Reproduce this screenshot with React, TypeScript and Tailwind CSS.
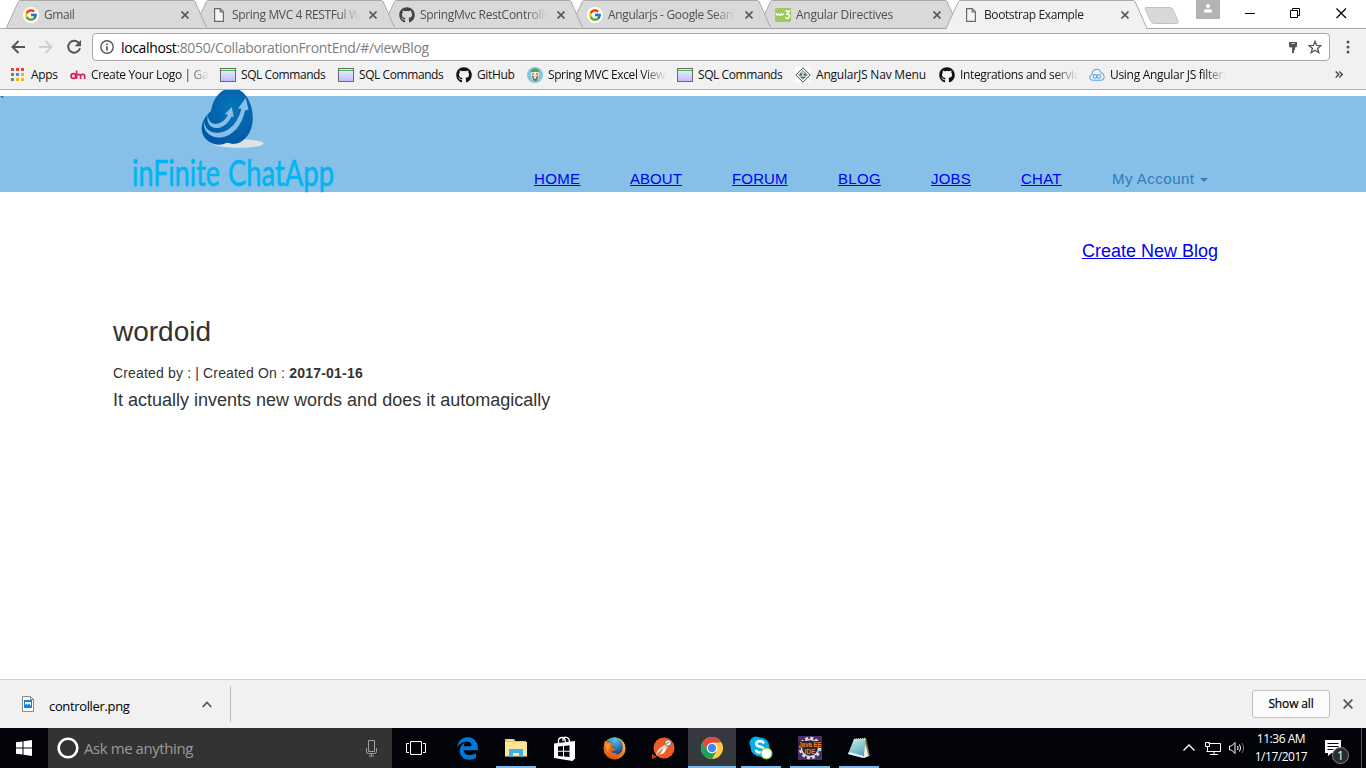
import React from "react";
import type { ReactNode } from "react";
import { FcGoogle } from "react-icons/fc";
import { FaGithub, FaEdgeLegacy } from "react-icons/fa";

const PageIcon = () => (
  <svg width="16" height="16" viewBox="0 0 16 16" fill="none" stroke="#6a6a6a" strokeWidth="1.2">
    <path d="M3.6 1.6h5.6l3.2 3.2v9.6H3.600z" fill="#f4f4f4" />
    <path d="M9.200 1.600v3.400h3.200" />
  </svg>
);

const GoogleIcon = () => (
  <span className="flex h-4 w-4 items-center justify-center rounded-full bg-white">
    <FcGoogle size={14} />
  </span>
);

const W3Icon = () => (
  <svg width="16" height="14" viewBox="0 0 16 14">
    <rect width="16" height="14" rx="1" fill="#9bcb5c" />
    <path d="M1 5.200q.8 3.300 2.500.8 1.500 2.500 2.800 0 1.200 1.800 2.500-.5" fill="none" stroke="#fff" strokeWidth="1.400" />
    <path d="M10.200 3h4l-2.200 3q3 0 2.500 2.600-1 2.600-4.300 1" fill="none" stroke="#fff" strokeWidth="1.500" />
  </svg>
);

const SqlIcon = () => (
  <svg width="16" height="14" viewBox="0 0 16 14">
    <defs>
      <linearGradient id="sql" x1="0" y1="0" x2="0" y2="1">
        <stop offset="0" stopColor="#f0f0ff" />
        <stop offset="1" stopColor="#bcbcff" />
      </linearGradient>
    </defs>
    <rect x=".5" y=".5" width="15" height="13" fill="url(#sql)" stroke="#6b6b6b" />
    <rect x="1" y="1" width="14" height="3" fill="#d9f5d4" />
    <rect x="1" y="2" width="14" height="1" fill="#43b649" />
  </svg>
);

const AppsIcon = () => (
  <svg width="14" height="14" viewBox="0 0 14 14">
    <path d="M0 0h3v3H0zM5 0h3v3H5zM10 0h3v3h-3z" fill="#ea4335" />
    <path d="M0 5h3v3H0zM0 10h3v3H0z" fill="#34a853" />
    <path d="M5 5h3v3H5z" fill="#4285f4" />
    <path d="M10 5h3v3h-3zM5 10h3v3H5zM10 10h3v3h-3z" fill="#fbb305" />
  </svg>
);

const DmIcon = () => (
  <svg width="17" height="10" viewBox="0 0 17 10" fill="none" stroke="#d12360" strokeWidth="1.800">
    <circle cx="3.600" cy="6" r="2.500" />
    <path d="M7 .300v8.900M7 5.500q1.900-2.500 4.200 0V9.200M11.200 5.500q2.400-2.500 4.400 0V9.200" />
  </svg>
);

const SpringIcon = () => (
  <svg width="16" height="16" viewBox="0 0 16 16">
    <circle cx="8" cy="8" r="8" fill="#7cc8e6" />
    <path d="M4 5h8v5l-2 4H6l-2-4z" fill="#f6eddc" />
    <path d="M3.500 5.500Q4 1.500 8 1.500t4.500 4q-4.500-1.500-9 0z" fill="#689b45" />
    <path d="M4.300 8.500Q8 10 11.700 8.500L10 14H6.500z" fill="#7d7557" />
    <path d="M6.300 9.500h3.400l-1 2H7.300z" fill="#fff" />
    <path d="M5 7h2M9 7h2" stroke="#444" />
  </svg>
);

const DiamondIcon = () => (
  <svg width="16" height="16" viewBox="0 0 16 16">
    <rect width="16" height="16" fill="#fbfbfb" />
    <path d="M8 .800 15.200 8 8 15.200.800 8z" fill="#fff" stroke="#4a4a4a" />
    <path d="M8 3.500 12.500 8 8 12.500 3.500 8z" fill="#b9cbc2" stroke="#6d8177" strokeWidth=".800" />
    <path d="M5 6.500h2v2H5zM9 6.500h2v2H9z" fill="#4c6157" />
    <path d="M6 10.500h4" stroke="#4c6157" />
  </svg>
);

const CloudIcon = () => (
  <svg width="17" height="14" viewBox="0 0 17 14" fill="none" stroke="#55a9ee" strokeWidth="1.100">
    <path d="M4.300 12.500Q.800 12.500.800 9.500q0-2.300 2.500-3Q3.500 1 8 1q3.700 0 4.700 3.700Q16 5.500 16 9q0 3.500-3.500 3.500z" />
    <circle cx="6.400" cy="8.500" r="1.900" />
    <circle cx="10.500" cy="8.500" r="1.900" />
  </svg>
);

const Cross = ({ size = 8, color = "#5a5a5a", w = 1.7 }: { size?: number; color?: string; w?: number }) => (
  <svg width={size} height={size} viewBox="0 0 8 8" stroke={color} strokeWidth={w}>
    <path d="M.500.500l7 7M7.500.500l-7 7" />
  </svg>
);

type TabInfo = { title: string; icon: ReactNode; z: string; track: string; active?: boolean };

const tabs: TabInfo[] = [
  { title: "Gmail", icon: <GoogleIcon />, z: "z-[5]", track: "tracking-[-0.45px]" },
  { title: "Spring MVC 4 RESTFul Web", icon: <PageIcon />, z: "z-[4]", track: "tracking-[-0.35px]" },
  { title: "SpringMvc RestController", icon: <FaGithub size={16} color="#444" />, z: "z-[3]", track: "tracking-[-0.28px]" },
  { title: "Angularjs - Google Search", icon: <GoogleIcon />, z: "z-[2]", track: "tracking-[-0.32px]" },
  { title: "Angular Directives", icon: <W3Icon />, z: "z-[1]", track: "tracking-[-0.25px]" },
  { title: "Bootstrap Example", icon: <PageIcon />, z: "z-[6]", track: "tracking-[-0.4px]", active: true },
];

function Tab({ tab }: { tab: TabInfo }) {
  return (
    <div className={`relative -mr-[13px] flex h-[29px] w-[201px] shrink-0 items-center pl-[17px] ${tab.z}`}>
      <svg className="absolute inset-0" width="201" height="29" viewBox="0 0 201 29">
        <path
          d="M0 28.500 12.500 1.500Q13 .500 14.500.500H187q1.500 0 2 1L201 28.500"
          fill={tab.active ? "#f1f1f1" : "#d9d9d9"}
          stroke="#a9a9a9"
        />
        <path d="M1 28.500H200" stroke={tab.active ? "#f1f1f1" : "#a0a0a0"} />
      </svg>
      <span className="relative flex w-4 shrink-0 justify-center">{tab.icon}</span>
      <span
        className={`relative ml-[5px] w-[127px] overflow-hidden whitespace-nowrap [mask-image:linear-gradient(to_right,#000_106px,transparent_127px)] ${tab.track} ${tab.active ? "text-[#222]" : "text-[#505050]"}`}
      >
        {tab.title}
      </span>
      <span className="relative ml-[10px]"><Cross /></span>
    </div>
  );
}

const bookmarks: { label: string; icon: ReactNode; cls: string }[] = [
  { label: "Create Your Logo | Game", icon: <DmIcon />, cls: "w-[117px] tracking-[-0.36px] [mask-image:linear-gradient(to_right,#000_94px,transparent_118px)]" },
  { label: "SQL Commands", icon: <SqlIcon />, cls: "w-[85px] tracking-[-0.42px]" },
  { label: "SQL Commands", icon: <SqlIcon />, cls: "w-[85px] tracking-[-0.42px]" },
  { label: "GitHub", icon: <FaGithub size={16} color="#111" />, cls: "w-[38px] tracking-[-0.35px]" },
  { label: "Spring MVC Excel View", icon: <SpringIcon />, cls: "w-[117px] tracking-[-0.4px] [mask-image:linear-gradient(to_right,#000_94px,transparent_118px)]" },
  { label: "SQL Commands", icon: <SqlIcon />, cls: "w-[85px] tracking-[-0.42px]" },
  { label: "AngularJS Nav Menu", icon: <DiamondIcon />, cls: "w-[111px] tracking-[-0.2px]" },
  { label: "Integrations and services", icon: <FaGithub size={16} color="#111" />, cls: "w-[117px] tracking-[-0.35px] [mask-image:linear-gradient(to_right,#000_94px,transparent_118px)]" },
  { label: "Using Angular JS filters", icon: <CloudIcon />, cls: "w-[115px] tracking-[-0.3px] [mask-image:linear-gradient(to_right,#000_94px,transparent_116px)]" },
];

function Browser() {
  return (
    <header className="h-[90px] shrink-0 border-b border-[#b0b0b0] bg-[#f1f1f1] text-[12px]">
      <div className="flex h-[29px] bg-white pl-1.5 shadow-[inset_0_-1px_0_#a9a9a9]">
        {tabs.map((t) => (
          <Tab key={t.title} tab={t} />
        ))}
        <svg className="ml-[9px] mt-[6px]" width="40" height="19" viewBox="0 0 40 19">
          <path d="M3 1.500H27q2 0 3 2L35 15q.5 2.500-1.500 2.500H11q-2 0-3-2L2.500 4Q1.500 1.500 3 1.500z" fill="#d8d8d8" stroke="#c2c2c2" />
        </svg>
        <div className="ml-[13px] flex h-[19px] w-6 justify-center bg-[#b3b3b3] pt-1">
          <svg width="8" height="9" viewBox="0 0 8 9" fill="#fff">
            <circle cx="4" cy="2" r="2" />
            <path d="M0 8.500V7q0-2 4-2t4 2v1.500z" />
          </svg>
        </div>
        <svg className="ml-[25px] mt-[7px]" width="102" height="12" viewBox="0 0 102 12" fill="none" stroke="#000">
          <path d="M0 6.500h10M45.500 3.500h7v7h-7zM47.500 3.500v-2h7v7h-2" />
          <path d="M91.500 1.500l9.500 9.500M101 1.500l-9.500 9.500" strokeWidth="1.200" />
        </svg>
      </div>

      <div className="flex h-[36px] items-center pl-[11px]">
        <svg width="66" height="16" viewBox="0 0 66 16" fill="none" strokeWidth="1.900">
          <path d="M14 8H1.500M7.500 2 1.500 8l6 6" stroke="#555" />
          <path d="M28 8h12.500M34.500 2l6 6-6 6" stroke="#cfcfcf" />
        </svg>
        <svg className="-ml-[11px] shrink-0" width="16" height="16" viewBox="0 0 16 16">
          <path d="M13.200 4.300A6 6 0 1 0 14 9.200" fill="none" stroke="#555" strokeWidth="2" />
          <path d="M15 1v6.300H8.700z" fill="#555" />
        </svg>
        <div className="ml-[10px] flex h-7 w-[1238px] items-center rounded-sm border border-[#a9a9a9] bg-white pl-[7px] pr-[7px]">
          <svg width="14" height="14" viewBox="0 0 14 14" fill="none" stroke="#555" strokeWidth="1.400">
            <circle cx="7" cy="7" r="6.200" />
            <path d="M7 6.200v4.300M7 3.400v1.600" strokeWidth="1.700" />
          </svg>
          <span className="ml-[7px] flex-1 whitespace-nowrap text-[14px] tracking-[-0.36px] text-[#808080]">
            <span className="text-black">localhost</span>:8050/CollaborationFrontEnd/#/viewBlog
          </span>
          <svg width="10" height="13" viewBox="0 0 10 13" fill="#555">
            <path d="M1 1h8v4q0 1.500-2 1.500V9H6v3H4V6.500H3Q1 6.500 1 5z" />
            <path d="M3 2.500h4" stroke="#bbb" />
          </svg>
          <svg className="ml-[10px]" width="14" height="14" viewBox="0 0 14 14" fill="none" stroke="#555" strokeWidth="1.300">
            <path d="M7 1.300l1.600 4.100 4.400.2-3.400 2.800 1.200 4.300L7 10.300l-3.800 2.400 1.200-4.300L1 5.600l4.400-.2z" />
          </svg>
        </div>
        <svg className="ml-4" width="4" height="14" viewBox="0 0 4 14" fill="#555">
          <circle cx="2" cy="2" r="1.500" />
          <circle cx="2" cy="7" r="1.500" />
          <circle cx="2" cy="12" r="1.500" />
        </svg>
      </div>

      <div className="-mt-px flex h-[21px] items-center pl-[11px] text-[#111]">
        <AppsIcon />
        <span className="ml-1.5 w-[39px] tracking-[-0.3px]">Apps</span>
        {bookmarks.map((b, i) => (
          <div key={i} className="mr-3 flex shrink-0 items-center">
            <span className="flex w-4 justify-center">{b.icon}</span>
            <span className={`ml-[5px] overflow-hidden whitespace-nowrap ${b.cls}`}>{b.label}</span>
          </div>
        ))}
        <svg className="ml-[98px]" width="8" height="7" viewBox="0 0 8 7" fill="none" stroke="#444" strokeWidth="1.400">
          <path d="M.700.500l3 3-3 3M4.300.500l3 3-3 3" />
        </svg>
      </div>
    </header>
  );
}

function Logo() {
  return (
    <svg className="-mt-[6px] ml-[131px] shrink-0" width="205" height="104" viewBox="131 90 205 104">
      <defs>
        <radialGradient id="egg" cx=".6" cy=".35" r=".7">
          <stop offset="0" stopColor="#0874b9" />
          <stop offset="1" stopColor="#0057a4" />
        </radialGradient>
      </defs>
      <ellipse cx="238.500" cy="143.500" rx="25" ry="4.300" fill="#e0e3e6" />
      <path d="M211 111C213 98 221 88 232 88c12 0 20.800 14 20.800 30 0 14-8 24.500-18 25.800-4 .500-5-1-8-1-4 2-9 2.500-13 1-8-2.500-13-9-12-17 .500-6 4-11 9.200-15.800z" fill="url(#egg)" />
      <path d="M204 121C202.500 131 210 138.500 221 137.500C233 136 242 125 245 110.500L248.500 109.500 245.700 98 238 108.500 241.500 108.500C238.500 121 231 130.500 220.500 132.500C211.500 134 205 130 204 121z" fill="#86c0e9" />
      <path d="M207.800 114.500C206 123 210.500 129 218 128C224.500 127 229 122 231.500 116.500L233.800 117 231.700 107 225 114 228 114.800C225.500 119.500 222 123 217 123.800C211.500 124.500 208 121 207.800 114.500z" fill="#86c0e9" />
      <g fontSize="36" fill="#00b5f1" stroke="#00b5f1" strokeWidth=".600" fontFamily="Lato, sans-serif">
        <text x="132" y="185.500" textLength="88" lengthAdjust="spacingAndGlyphs">inFinite</text>
        <text x="228" y="185.500" textLength="106" lengthAdjust="spacingAndGlyphs">ChatApp</text>
      </g>
    </svg>
  );
}

const navItems: { label: string; cls: string }[] = [
  { label: "HOME", cls: "w-[46px] mr-[50px] tracking-[0.33px]" },
  { label: "ABOUT", cls: "w-[52px] mr-[50px] tracking-[0.05px]" },
  { label: "FORUM", cls: "w-[56px] mr-[50px] tracking-[0.15px]" },
  { label: "BLOG", cls: "w-[43px] mr-[50px] tracking-[0.3px]" },
  { label: "JOBS", cls: "w-[40px] mr-[50px] tracking-[0.2px]" },
  { label: "CHAT", cls: "w-[41px] mr-[50px] tracking-[0.25px]" },
];

function Page() {
  return (
    <main className="flex flex-1 flex-col bg-white font-['Liberation_Sans',Arial,sans-serif] text-[#333]">
      <div className="mt-[6px] flex h-24 bg-[#86c0e9]">
        <span className="-mr-2 -mt-[2px] h-4 w-2 text-[14px] leading-[16px]">`</span>
        <Logo />
        <nav className="ml-[198px] mt-[73px] flex h-5 items-center whitespace-nowrap text-[15px] text-[#0000ee]">
          {navItems.map((n) => (
            <a key={n.label} className={`underline ${n.cls}`}>
              {n.label}
            </a>
          ))}
          <span className="tracking-[0.5px] text-[#337ab7]">My Account</span>
          <svg className="ml-[5px] mt-[2px]" width="8" height="4" viewBox="0 0 8 4" fill="#337ab7">
            <path d="M0 0h8L4 4z" />
          </svg>
        </nav>
      </div>
      <div className="mt-[48px] pr-[148px] text-right text-[18px] leading-[22px] text-[#0000ee]">
        <a className="underline">Create New Blog</a>
      </div>
      <article className="mt-[53px] pl-[113px]">
        <h1 className="text-[28px] leading-[34px]">wordoid</h1>
        <p className="mt-[14px] text-[14px] leading-5">
          <span className="tracking-[0.16px]">Created by : | Created On : </span>
          <b className="tracking-[0.22px]">2017-01-16</b>
        </p>
        <p className="mt-[5px] text-[18px] leading-[25px]">It actually invents new words and does it automagically</p>
      </article>
    </main>
  );
}

function Downloads() {
  return (
    <div className="flex h-[49px] shrink-0 items-center border-t border-[#d0d0d0] bg-[#f1f1f1] pl-[22px] text-xs text-black">
      <svg width="12" height="16" viewBox="0 0 12 16">
        <path d="M.500.500h8l3 3v12H.500z" fill="#fff" stroke="#8a8a8a" />
        <path d="M8.500.500v3h3" fill="none" stroke="#8a8a8a" />
        <path d="M2 4h8v8H2z" fill="#1683d8" />
        <path d="M3 6h6v4L7 7.500 5.500 9 4.500 7.500 3 9z" fill="#fff" />
      </svg>
      <span className="ml-[15px] mt-[5px] w-[153px] text-[13px] tracking-[-0.35px]">controller.png</span>
      <svg width="10" height="7" viewBox="0 0 10 7" fill="none" stroke="#555" strokeWidth="1.700">
        <path d="M.700 6 5 1.500 9.300 6" />
      </svg>
      <span className="ml-[18px] h-9 w-px bg-[#bcbcbc]" />
      <button className="-mt-px ml-auto h-7 w-[78px] rounded-[3px] border border-[#c1c1c1] bg-[#fbfbfb] text-[12px] tracking-[-0.15px] [-webkit-text-stroke:0.200px_#000]">
        Show all
      </button>
      <span className="ml-[13px] mr-[13px]"><Cross size={10} w={1.500} /></span>
    </div>
  );
}

const Explorer = () => (
  <svg width="22" height="20" viewBox="0 0 22 20">
    <path d="M0 1h9l1.500 2H21v15H0z" fill="#f5c14b" />
    <path d="M0 4h22v14.500H0z" fill="#ffe694" />
    <path d="M2 1.500h6v1H2z" fill="#fff3c4" />
    <path d="M4 11h14v8h-4v-4H8v4H4z" fill="#3cb0e8" />
  </svg>
);
const Store = () => (
  <svg width="22" height="25" viewBox="0 0 22 25">
    <path d="M4.500 7V4Q5 1.500 8 1.500T11.500 6M9 5V3q1-2.500 4-1.500 2.500 1 2.500 4.500" fill="none" stroke="#fff" strokeWidth="1.300" />
    <path d="M0 7.500 21 5v17.500L18.500 25 0 22z" fill="#fff" />
    <path d="M4 10.500l5-.500v4.800H4zM10 9.900l5.500-.600v5.500H10zM4 15.800h5v4.600l-5-.500zM10 15.800h5.500v5.300l-5.500-.600z" fill="#05070c" />
  </svg>
);
const Firefox = () => (
  <svg width="23" height="23" viewBox="0 0 23 23">
    <defs>
      <linearGradient id="fx" x1=".8" y1="0" x2=".2" y2="1">
        <stop offset="0" stopColor="#ffdc3d" />
        <stop offset=".5" stopColor="#f4861d" />
        <stop offset="1" stopColor="#c93a1c" />
      </linearGradient>
      <radialGradient id="globe" cx=".5" cy=".1" r=".9">
        <stop offset="0" stopColor="#59c9f0" />
        <stop offset="1" stopColor="#173b78" />
      </radialGradient>
    </defs>
    <circle cx="11.500" cy="11.500" r="11" fill="url(#fx)" />
    <path d="M4 5Q7 .500 12 .500q5 .500 7 5 2 5-.500 9.500Q15 19 10.500 17.500 7 16 6.500 12z" fill="url(#globe)" />
    <path d="M2 3.500l2 2.500q2-1 4 0l3 .5q-.5 2-2.500 2.500 0 2 1.500 2.500l2.500.500q-1.500 2.500-4.500 2.200 2.500 2.800 6 1.800l-2 4Q4 20 1.500 15q-1.500-6 .5-11.500z" fill="#e8661b" />
    <path d="M2 4l2 2.500q2-.800 3.500 0l-1 4q-2 2-1 5Q2 13 2 4z" fill="#f39a2c" />
  </svg>
);
const Postman = () => (
  <svg width="24" height="23" viewBox="0 0 24 23">
    <circle cx="13" cy="11" r="10.500" fill="#f15a24" />
    <path d="M1 17l5 3-5 2z" fill="#c9431b" />
    <path d="M5 18q1-5 5-8l5-3 2 3-5 3.500q-4 1-5.500 5z" fill="#f5d9c8" />
    <path d="M8 18l5-6 3-1-3 5z" fill="#fff" />
    <circle cx="17" cy="6" r="3.200" fill="#eee" stroke="#555" strokeWidth=".800" />
    <path d="M15 7l3-2M5.500 18l6-6" stroke="#777" />
  </svg>
);
const Chrome = () => (
  <svg width="22" height="22" viewBox="0 0 22 22">
    <circle cx="11" cy="11" r="11" fill="#ffcd40" />
    <path d="M1.500 5.500A11 11 0 0 1 20.500 5.500H11L6.200 13.700z" fill="#dd4b3e" />
    <path d="M1.500 5.500A11 11 0 0 0 11 22l4.700-8.300L6.200 13.700z" fill="#1aa260" />
    <circle cx="11" cy="11" r="5.300" fill="#fff" />
    <circle cx="11" cy="11" r="4.200" fill="#4587f4" />
  </svg>
);
const Skype = () => (
  <svg width="24" height="24" viewBox="0 0 24 24">
    <circle cx="7" cy="7" r="6.500" fill="#00aff0" />
    <circle cx="11" cy="11" r="9.500" fill="#00aff0" />
    <circle cx="16" cy="16" r="6" fill="#00aff0" />
    <path d="M15 7.500Q13.500 5 11 5 7.500 5.200 7.300 7.800q.2 2.200 4 3 3.700.800 3.700 3Q14.500 16.500 11 16.500T6.800 13.800" fill="none" stroke="#fff" strokeWidth="2.600" />
    <circle cx="17.500" cy="17.500" r="5.500" fill="#fff" stroke="#83c41d" strokeWidth="1.200" />
  </svg>
);
const JavaEE = () => (
  <svg width="24" height="24" viewBox="0 0 24 24">
    <rect width="24" height="24" fill="#4a2e67" />
    <circle cx="12" cy="12" r="10" fill="none" stroke="#ddd" strokeWidth="2.500" strokeDasharray="3 2.236" />
    <circle cx="12" cy="12" r="8.500" fill="#292630" stroke="#ddd" strokeWidth="1.300" />
    <path d="M0 5h24v6.500H0z" fill="#33222f" />
    <g fill="#f47c20" fontFamily="Liberation Sans, sans-serif" fontWeight="bold">
      <text x=".500" y="11" fontSize="7.500" textLength="23" lengthAdjust="spacingAndGlyphs">Java EE</text>
      <text x="6.500" y="18" fontSize="7.500" textLength="11" lengthAdjust="spacingAndGlyphs">IDE</text>
    </g>
  </svg>
);
const Notepad = () => (
  <svg width="24" height="22" viewBox="0 0 24 22">
    <defs>
      <linearGradient id="note" x1="0" y1="0" x2=".5" y2="1">
        <stop offset="0" stopColor="#d6f3f5" />
        <stop offset="1" stopColor="#58a7b8" />
      </linearGradient>
    </defs>
    <path d="M19 1l4 18-7 2z" fill="#94703b" />
    <path d="M17 2l4.500 17-4.500 2z" fill="#eee" />
    <path d="M7 2 19 1.500 16.500 21 1 17z" fill="url(#note)" />
    <path d="M1 17l15.500 4 .300-2L2 15z" fill="#ecf5f5" />
    <path d="M7 2.500l12-1" stroke="#ddd" strokeWidth="1.500" strokeDasharray="1 1" />
  </svg>
);

const apps: { name: string; icon: ReactNode; cls: string; bar: string }[] = [
  { name: "edge", icon: <FaEdgeLegacy size={23} color="#0078d7" />, cls: "", bar: "" },
  { name: "explorer", icon: <Explorer />, cls: "", bar: "w-10 bg-[#76b9ed]" },
  { name: "store", icon: <Store />, cls: "", bar: "" },
  { name: "firefox", icon: <Firefox />, cls: "", bar: "" },
  { name: "postman", icon: <Postman />, cls: "", bar: "" },
  { name: "chrome", icon: <Chrome />, cls: "bg-[#35383d]", bar: "w-12 bg-[#76b9ed]" },
  { name: "skype", icon: <Skype />, cls: "", bar: "w-10 bg-[#76b9ed]" },
  { name: "java", icon: <JavaEE />, cls: "", bar: "w-10 bg-[#76b9ed]" },
  { name: "notepad", icon: <Notepad />, cls: "", bar: "w-10 bg-[#76b9ed]" },
];

function Taskbar() {
  return (
    <footer className="flex h-10 shrink-0 items-center bg-[#02040a] text-white">
      <div className="flex w-12 justify-center">
        <svg width="16" height="16" viewBox="0 0 16 16" fill="#fff">
          <path d="M0 2.300 6.500 1.400v6.100H0zM7.500 1.200 16 0v7.500H7.500zM0 8.500h6.500v6.100L0 13.700zM7.500 8.500H16V16l-8.500-1.200z" />
        </svg>
      </div>
      <div className="flex h-full w-[344px] items-center bg-[#333] pl-[9px] pr-[14px]">
        <svg width="22" height="22" viewBox="0 0 22 22">
          <circle cx="11" cy="11" r="9.300" fill="none" stroke="#fff" strokeWidth="2.600" />
        </svg>
        <span className="ml-[5px] mt-px flex-1 text-[15px] tracking-[-0.43px] text-[#9a9a9a]">Ask me anything</span>
        <svg width="13" height="17" viewBox="0 0 13 17" fill="none" stroke="#a0a0a0">
          <path d="M3.500.500h6v11h-6zM1.500 8v3.500q0 2 2 2h6q2 0 2-2V8M6.500 13.500v2.500M4 16h5" />
        </svg>
      </div>
      <div className="mr-[3px] flex w-12 justify-center">
        <svg width="20" height="14" viewBox="0 0 20 14" fill="none" stroke="#fff">
          <path d="M4.500.500h11v13h-11zM3 2.500H.500v9H3M17 2.500h2.500v9H17" />
        </svg>
      </div>
      <div className="flex h-full gap-px">
        {apps.map((a) => (
          <div key={a.name} className={`flex h-full w-12 flex-col items-center ${a.cls}`}>
            <span className="flex h-[38px] items-center pt-[2px]">{a.icon}</span>
            <span className={`h-[2px] ${a.bar}`} />
          </div>
        ))}
      </div>
      <svg className="ml-auto" width="64" height="16" viewBox="0 0 64 16" fill="none" stroke="#fff">
        <path d="M1.500 10.500 7 5l5.500 5.500" strokeWidth="1.300" />
        <path d="M26.500 3.500h12v8H24.500M28 14.500h8M32 11.500v3M23.500 2.500h4v4h-4zM25.500 6.500v5" />
        <path d="M47.500 6h2L53 2.500v11L49.500 10h-2z" />
        <path d="M55.500 6q1.200 2 0 4M57.500 4.500q2.200 3.500 0 7" />
        <path d="M60 3q3.200 5 0 10" stroke="#777" />
      </svg>
      <div className="ml-[3px] w-[64px] text-center text-[12px] leading-[18px] tracking-[-0.48px]">
        <div>11:36 AM</div>
        <div>1/17/2017</div>
      </div>
      <svg className="ml-[11px] mt-[7px]" width="26" height="26" viewBox="0 0 26 26">
        <path d="M1 1h16v13H7.500L4 17v-3H1z" fill="#fff" />
        <path d="M3.500 4.500h11M3.500 7.500h11M3.500 10.500h6" stroke="#02040a" />
        <circle cx="16.500" cy="16.500" r="8" fill="#2b2b2b" stroke="#888" />
        <text x="16.500" y="21" textAnchor="middle" fontSize="12" fill="#fff" fontFamily="Open Sans, sans-serif">1</text>
      </svg>
      <span className="ml-[11px] mr-1 h-full w-px bg-[#555]" />
    </footer>
  );
}

export default function App() {
  return (
    <div className="flex h-[768px] w-[1366px] flex-col overflow-hidden font-['Open_Sans','Noto_Sans',sans-serif]">
      <Browser />
      <Page />
      <Downloads />
      <Taskbar />
    </div>
  );
}
